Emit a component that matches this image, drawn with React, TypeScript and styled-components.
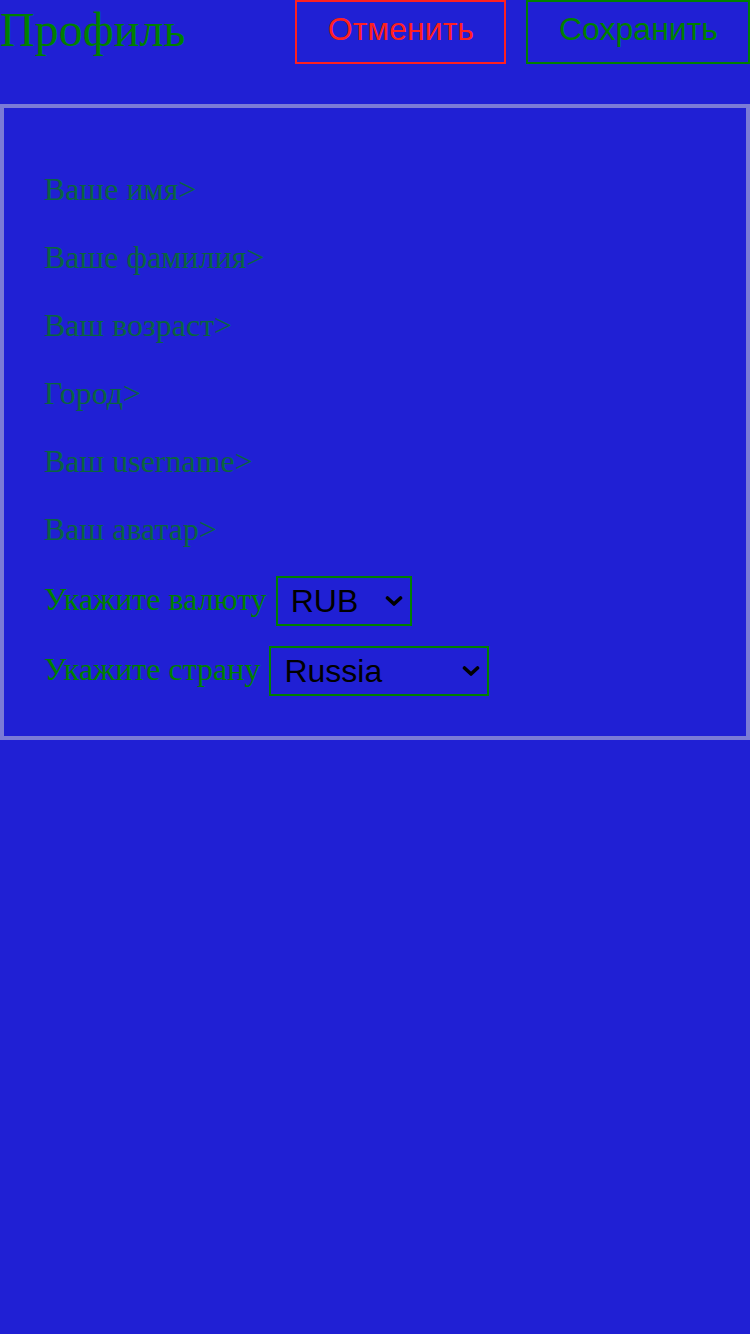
import React from "react";
import styled, { createGlobalStyle } from "styled-components";

const GlobalStyle = createGlobalStyle`
  html, body {
    margin: 0;
    padding: 0;
    background: rgb(32, 32, 212);
    min-height: 1334px;
  }
`;

const Page = styled.div`
  width: 750px;
  min-height: 1334px;
  background: rgb(32, 32, 212);
`;

const Header = styled.div`
  display: flex;
  justify-content: space-between;
  align-items: flex-start;
  height: 104px;
`;

const Title = styled.h1`
  margin: 0;
  font-family: "Liberation Serif", serif;
  font-weight: normal;
  font-size: 48px;
  line-height: 60px;
  color: #008000;
`;

const Actions = styled.div`
  display: flex;
  gap: 20px;
`;

const ActionButton = styled.button<{ $tone: string }>`
  box-sizing: border-box;
  height: 64px;
  padding: 0 30px 6px 31px;
  background: transparent;
  border: 2px solid ${(p) => p.$tone};
  color: ${(p) => p.$tone};
  font-family: "Liberation Sans", Arial, sans-serif;
  font-size: 32px;
  cursor: pointer;
`;

const Panel = styled.div`
  border: 4px solid #7b7bd6;
  padding: 63px 40px 40px;
  display: flex;
  flex-direction: column;
`;

const Links = styled.div`
  display: flex;
  flex-direction: column;
  gap: 31px;
`;

const LinkItem = styled.div`
  font-family: "Liberation Serif", serif;
  font-size: 32px;
  line-height: 37px;
  color: rgb(10, 100, 64);
`;

const Fields = styled.div`
  display: flex;
  flex-direction: column;
  gap: 20px;
  margin-top: 28px;
`;

const Field = styled.label`
  display: flex;
  align-items: center;
  gap: 9px;
  font-family: "Liberation Serif", serif;
  font-size: 32px;
  color: #008000;
`;

const FieldText = styled.span`
  margin-bottom: 3px;
`;

const SelectWrap = styled.span`
  position: relative;
  display: inline-flex;
`;

const Select = styled.select<{ $width: number }>`
  box-sizing: border-box;
  width: ${(p) => p.$width}px;
  height: 50px;
  padding: 0 30px 0 13px;
  appearance: none;
  background: transparent;
  border: 2px solid #008000;
  border-radius: 0;
  color: #000;
  font-family: "Liberation Sans", Arial, sans-serif;
  font-size: 32px;
  outline: none;
`;

const Chevron = styled.svg`
  position: absolute;
  right: 9px;
  top: 50%;
  transform: translateY(-50%);
  pointer-events: none;
`;

const links = [
  "Ваше имя>",
  "Ваше фамилия>",
  "Ваш возраст>",
  "Город>",
  "Ваш username>",
  "Ваш аватар>",
];

const Dropdown = ({ width, value, options }: { width: number; value: string; options: string[] }) => (
  <SelectWrap>
    <Select $width={width} defaultValue={value}>
      {options.map((o) => (
        <option key={o} value={o}>
          {o}
        </option>
      ))}
    </Select>
    <Chevron width="18" height="12" viewBox="0 0 18 12">
      <path d="M2.5 3 L9 9 L15.5 3" fill="none" stroke="#000" strokeWidth="3.6" strokeLinecap="round" strokeLinejoin="round" />
    </Chevron>
  </SelectWrap>
);

export default function App() {
  return (
    <Page>
      <GlobalStyle />
      <Header>
        <Title>Профиль</Title>
        <Actions>
          <ActionButton $tone="#ff2020">Отменить</ActionButton>
          <ActionButton $tone="#008000">Сохранить</ActionButton>
        </Actions>
      </Header>
      <Panel>
        <Links>
          {links.map((text) => (
            <LinkItem key={text}>{text}</LinkItem>
          ))}
        </Links>
        <Fields>
          <Field>
            <FieldText>Укажите валюту</FieldText>
            <Dropdown width={136} value="RUB" options={["RUB", "USD", "EUR"]} />
          </Field>
          <Field>
            <FieldText>Укажите страну</FieldText>
            <Dropdown width={220} value="Russia" options={["Russia", "USA", "Germany"]} />
          </Field>
        </Fields>
      </Panel>
    </Page>
  );
}
